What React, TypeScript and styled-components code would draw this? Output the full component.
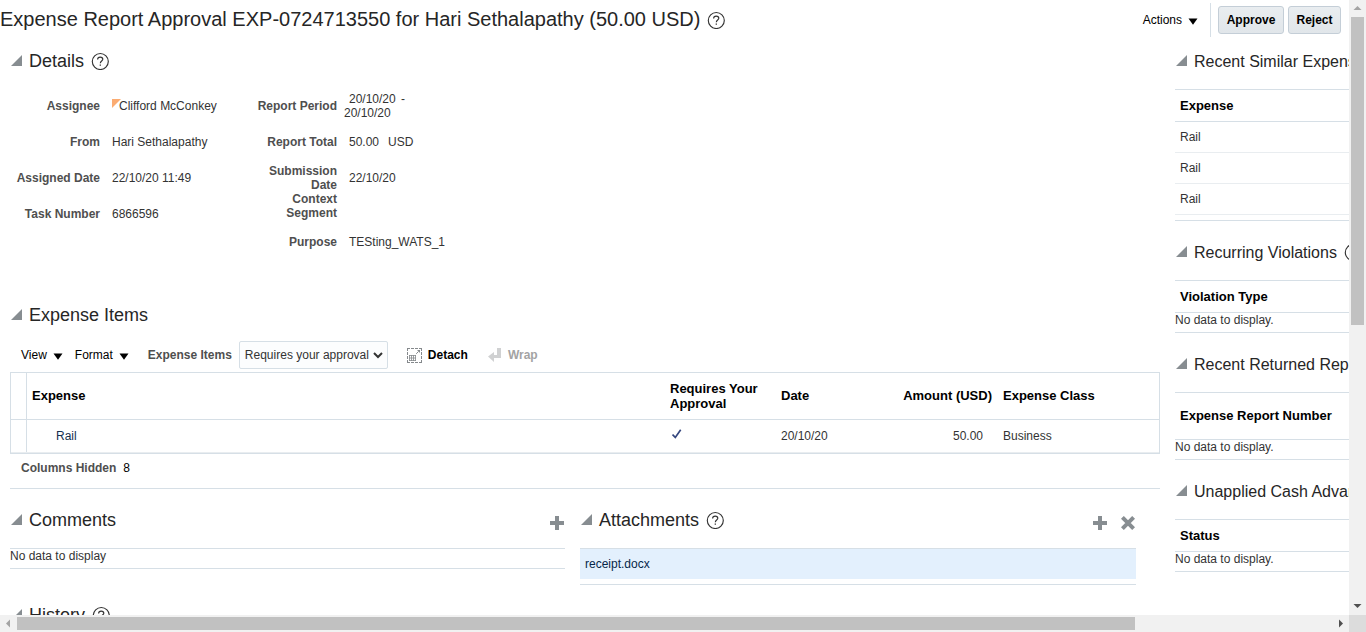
import React from "react";
import styled, { createGlobalStyle } from "styled-components";

const Global = createGlobalStyle`
  * { box-sizing: border-box; }
  body { margin: 0; background: #fff; overflow: hidden; }
`;

const rule = "#d6dfe6";

const Frame = styled.div`
  display: grid;
  grid-template: 615px 17px / 1349px 17px;
  width: 1366px;
  height: 632px;
  overflow: hidden;
  font: 12px/14px "Liberation Sans", Arial, sans-serif;
  color: #333;
  white-space: nowrap;
`;
const Page = styled.div`
  overflow: hidden;
  display: flex;
  flex-direction: column;
`;
const Header = styled.header`
  height: 40px;
  flex: none;
  display: flex;
  justify-content: space-between;
  padding-right: 8px;
`;
const Title = styled.h1`
  margin: 0;
  display: flex;
  align-items: center;
  gap: 7px;
  font-size: 20px;
  line-height: 22px;
  font-weight: 400;
  color: #262626;
  height: 38px;
  & > svg { margin-top: 2px; }
`;
const Commands = styled.div`
  display: flex;
  align-items: center;
  height: 40px;
`;
const MenuButton = styled.span<{ $gap?: number }>`
  display: inline-flex;
  align-items: center;
  gap: 6px;
  color: #000;
  margin-right: ${(p) => p.$gap ?? 0}px;
  & > svg { margin-top: 2px; }
`;
const CommandRule = styled.span`
  width: 1px;
  height: 34px;
  background: ${rule};
  margin-right: 7px;
`;
const Button = styled.button<{ $width: number }>`
  width: ${(p) => p.$width}px;
  height: 28px;
  padding: 0;
  margin-left: 0;
  border: 1px solid #c4ced7;
  border-radius: 3px;
  background: linear-gradient(#e9edf0, #e1e6ea);
  font: bold 12px/14px "Liberation Sans", Arial, sans-serif;
  color: #000;
  & + & { margin-left: 4px; }
`;
const Body = styled.div`
  display: flex;
  flex: none;
  padding-top: 6px;
`;
const Main = styled.main`
  width: 1175px;
  flex: none;
  padding: 0 15px 0 10px;
`;
const Side = styled.aside`
  width: 174px;
  flex: none;
  overflow: hidden;
`;
const Heading = styled.div<{ $size?: number }>`
  display: flex;
  align-items: center;
  height: 30px;
  padding-left: 1px;
  font-size: ${(p) => p.$size ?? 18}px;
  line-height: 20px;
  color: #262626;
  & > svg { flex: none; }
  & > svg:first-child { margin-bottom: 1px; }
  & > h2 { padding-top: ${(p) => (p.$size ? 2 : 0)}px; }
`;
const HeadingText = styled.h2`
  margin: 0 7px;
  font: inherit;
`;
const HeadingTools = styled.span`
  margin: 6px 1px 0 auto;
  display: flex;
  gap: 14px;
`;

const Form = styled.div`
  display: flex;
  height: 224px;
  padding-top: 12px;
`;
const FormColumn = styled.div<{ $width: number }>`
  width: ${(p) => p.$width}px;
`;
const Field = styled.div<{ $height?: number; $top?: number }>`
  display: flex;
  align-items: center;
  height: ${(p) => p.$height ?? 36}px;
  margin-top: ${(p) => p.$top ?? 0}px;
`;
const Label = styled.span<{ $width: number }>`
  flex: none;
  width: ${(p) => p.$width}px;
  margin-right: 12px;
  text-align: right;
  font-weight: bold;
  color: #4f4f4f;
`;
const Value = styled.span<{ $gap?: number }>`
  display: inline-flex;
  gap: ${(p) => p.$gap ?? 9}px;
`;
const Period = styled.span`
  margin-left: -5px;
`;
const PeriodStart = styled.span`
  display: block;
  padding-left: 5px;
  word-spacing: 2px;
`;
const Flag = styled.svg`
  flex: none;
  margin-right: -2px;
`;

const Toolbar = styled.div`
  display: flex;
  align-items: center;
  height: 42px;
  padding-left: 11px;
  padding-top: 8px;
`;
const ToolLabel = styled.span`
  font-weight: bold;
  color: #4f4f4f;
  margin: 0 7px 0 8px;
`;
const Choice = styled.span`
  display: flex;
  align-items: center;
  justify-content: space-between;
  width: 149px;
  height: 28px;
  padding: 0 4px 0 5px;
  border: 1px solid ${rule};
  border-radius: 2px;
  background: #fcfdfe;
  color: #333;
  margin-right: 19px;
`;
const Tool = styled.span<{ $off?: boolean }>`
  display: flex;
  align-items: center;
  gap: ${(p) => (p.$off ? 7 : 6)}px;
  font-weight: bold;
  color: ${(p) => (p.$off ? "#a3a3a3" : "#000")};
  margin-right: 20px;
`;

const Grid = styled.div`
  border: 1px solid ${rule};
  height: 82px;
`;
const GridRow = styled.div<{ $head?: boolean }>`
  display: grid;
  grid-template-columns: 16px 638px 111px 111px 111px 1fr;
  height: ${(p) => (p.$head ? 47 : 33)}px;
  border-bottom: 1px solid ${(p) => (p.$head ? rule : "#e9edf0")};
  align-items: center;
  font-size: ${(p) => (p.$head ? 13 : 12)}px;
  line-height: ${(p) => (p.$head ? 15 : 14)}px;
  font-weight: ${(p) => (p.$head ? "bold" : "normal")};
  color: ${(p) => (p.$head ? "#000" : "#333")};
`;
const RowHandle = styled.span`
  height: 100%;
  border-right: 1px solid ${rule};
`;
const Cell = styled.span<{ $left?: number; $right?: number; $bottom?: number; $num?: boolean; $link?: boolean }>`
  padding-left: ${(p) => p.$left ?? 5}px;
  padding-right: ${(p) => p.$right ?? 0}px;
  padding-bottom: ${(p) => p.$bottom ?? 0}px;
  text-align: ${(p) => (p.$num ? "right" : "left")};
  color: ${(p) => (p.$link ? "#14314f" : "inherit")};
`;
const HiddenColumns = styled.div`
  height: 35px;
  padding: 7px 0 0 11px;
  border-bottom: 1px solid ${rule};
  color: #000;
  b { color: #4f4f4f; margin-right: 7px; }
`;

const Panels = styled.div`
  display: grid;
  grid-template-columns: 555px 556px;
  column-gap: 15px;
  height: 111px;
  padding-top: 16px;
`;
const PanelBody = styled.div<{ $height: number }>`
  margin-top: 13px;
  height: ${(p) => p.$height}px;
  border: solid ${rule};
  border-width: 1px 0;
`;
const FileRow = styled.div`
  height: 30px;
  padding: 8px 5px;
  background: #e3f0fd;
  color: #06274a;
`;

const SideSection = styled.section<{ $height: number }>`
  height: ${(p) => p.$height}px;
`;
const SideTable = styled.div<{ $bottom?: number }>`
  margin-top: 13px;
  padding-bottom: ${(p) => p.$bottom ?? 0}px;
  border: solid ${rule};
  border-width: 1px 0;
`;
const SideHead = styled.div<{ $height?: number }>`
  display: flex;
  align-items: center;
  height: ${(p) => p.$height ?? 32}px;
  padding-left: 5px;
  border-bottom: 1px solid ${rule};
  font-size: 13px;
  font-weight: bold;
  color: #000;
`;
const SideRow = styled.div`
  height: 31px;
  padding: 8px 5px;
  border-bottom: 1px solid #e9edf0;
`;
const SideEmpty = styled.div`
  height: 19px;
`;

const Track = styled.div<{ $vertical?: boolean }>`
  display: flex;
  flex-direction: ${(p) => (p.$vertical ? "column" : "row")};
  justify-content: space-between;
  background: #f1f1f1;
`;
const Thumb = styled.div<{ $vertical?: boolean }>`
  background: #c1c1c1;
  width: ${(p) => (p.$vertical ? "13px" : "1118px")};
  height: ${(p) => (p.$vertical ? "308px" : "13px")};
  margin: ${(p) => (p.$vertical ? "0 2px auto" : "2px auto 2px 0")};
`;
const Corner = styled.div`
  background: #dcdcdc;
`;

const Disclosure = () => (
  <svg width="11" height="11" viewBox="0 0 11 11">
    <path d="M11 0V11H0Z" fill="#878d91" />
  </svg>
);
const Help = () => (
  <svg width="18" height="18" viewBox="0 0 18 18" fill="none" stroke="#333" strokeWidth="1.15">
    <circle cx="9.3" cy="9.5" r="8" />
    <path d="M6.6 7.5C6.6 6 7.6 5.1 9.2 5.1S11.8 5.9 11.8 7.2C11.8 9 9.3 9 9.3 11.2" />
    <path d="M9.3 12.4V13.7" strokeWidth="1.3" />
  </svg>
);
const Down = () => (
  <svg width="10" height="7" viewBox="0 0 10 7">
    <path d="M.5 .5H9.5L5 6.8Z" fill="#000" />
  </svg>
);
const Plus = () => (
  <svg width="14" height="14" viewBox="0 0 14 14">
    <path d="M5 0H9V5H14V9H9V14H5V9H0V5H5Z" fill="#878d91" />
  </svg>
);
const Cross = () => (
  <svg width="14" height="14" viewBox="0 0 14 14">
    <path d="M1.4 1.4L12.6 12.6M12.6 1.4L1.4 12.6" stroke="#878d91" strokeWidth="4" />
  </svg>
);
const DetachIcon = () => (
  <svg width="15" height="15" viewBox="0 0 15 15" fill="none" stroke="#85898c">
    <path d="M0 .5H15M0 14.5H15M.5 0V15M14.5 0V15" strokeDasharray="3 1" />
    <path d="M2 7.5H9M2.5 7V13M4.5 7V13M6.5 7V13M8.5 7V13M2 10H9M2 12.5H9" strokeWidth=".8" />
    <path d="M9.2 5.8L11.5 3.5" />
    <path d="M10 2H13V5Z" fill="#85898c" stroke="none" />
  </svg>
);
const WrapIcon = () => (
  <svg width="13" height="14" viewBox="0 0 13 14">
    <path d="M9 0H13V10H6V14L0 8.5L6 4V7H9Z" fill="#d0d1d2" />
  </svg>
);
const Check = () => (
  <svg width="10" height="10" viewBox="0 0 10 10" fill="none" stroke="#35477f" strokeWidth="1.7">
    <path d="M.5 5.6L3.3 8.4L8.7 .8" />
  </svg>
);
const arrows = {
  up: "M4.5 10H12.5L8.5 6Z",
  down: "M4.5 6H12.5L8.5 10Z",
  left: "M10 4.5V12.5L6 8.5Z",
  right: "M7 4.5V12.5L11 8.5Z",
};
const ScrollArrow = ({ dir, fill }: { dir: keyof typeof arrows; fill: string }) => (
  <svg width="17" height="17" viewBox="0 0 17 17">
    <path d={arrows[dir]} fill={fill} />
  </svg>
);

type SectionHeadingProps = { text: string; size?: number; help?: boolean; children?: React.ReactNode };
const SectionHeading = ({ text, size, help, children }: SectionHeadingProps) => (
  <Heading $size={size}>
    <Disclosure />
    <HeadingText>{text}</HeadingText>
    {help && <Help />}
    {children}
  </Heading>
);

const emptySections = [
  { title: "Recurring Violations", column: "Violation Type", height: 112, head: 32, help: true },
  { title: "Recent Returned Reports", column: "Expense Report Number", height: 127, head: 47 },
  { title: "Unapplied Cash Advances", column: "Status", height: 112, head: 32 },
];

export default function App() {
  return (
    <Frame>
      <Global />
      <Page>
        <Header>
          <Title>
            Expense Report Approval EXP-0724713550 for Hari Sethalapathy (50.00 USD)
            <Help />
          </Title>
          <Commands>
            <MenuButton $gap={12}>Actions <Down /></MenuButton>
            <CommandRule />
            <Button $width={66}>Approve</Button>
            <Button $width={53}>Reject</Button>
          </Commands>
        </Header>
        <Body>
          <Main>
            <SectionHeading text="Details" help />
            <Form>
              <FormColumn $width={207}>
                <Field>
                  <Label $width={90}>Assignee</Label>
                  <Value $gap={0}>
                    <Flag width="9" height="9" viewBox="0 0 9 9"><path d="M0 0H9L0 9Z" fill="#fbac72" /></Flag>
                    <span>Clifford McConkey</span>
                  </Value>
                </Field>
                <Field><Label $width={90}>From</Label><Value>Hari Sethalapathy</Value></Field>
                <Field><Label $width={90}>Assigned Date</Label><Value>22/10/20 11:49</Value></Field>
                <Field><Label $width={90}>Task Number</Label><Value>6866596</Value></Field>
              </FormColumn>
              <FormColumn $width={260}>
                <Field>
                  <Label $width={120}>Report Period</Label>
                  <Period><PeriodStart>20/10/20 -</PeriodStart>20/10/20</Period>
                </Field>
                <Field><Label $width={120}>Report Total</Label><Value><span>50.00</span><span>USD</span></Value></Field>
                <Field $height={28} $top={4}><Label $width={120}>Submission<br />Date</Label><Value>22/10/20</Value></Field>
                <Field $height={28}><Label $width={120}>Context<br />Segment</Label></Field>
                <Field $top={4}><Label $width={120}>Purpose</Label><Value>TESting_WATS_1</Value></Field>
              </FormColumn>
            </Form>

            <SectionHeading text="Expense Items" />
            <Toolbar>
              <MenuButton $gap={12}>View <Down /></MenuButton>
              <MenuButton $gap={11}>Format <Down /></MenuButton>
              <ToolLabel>Expense Items</ToolLabel>
              <Choice>
                Requires your approval
                <svg width="10" height="7" viewBox="0 0 10 7" fill="none" stroke="#333" strokeWidth="2">
                  <path d="M1 1L5 5L9 1" />
                </svg>
              </Choice>
              <Tool><DetachIcon />Detach</Tool>
              <Tool $off><WrapIcon />Wrap</Tool>
            </Toolbar>
            <Grid>
              <GridRow $head>
                <RowHandle />
                <Cell $bottom={2}>Expense</Cell>
                <Cell>Requires Your<br />Approval</Cell>
                <Cell $bottom={2}>Date</Cell>
                <Cell $bottom={2} $left={0} $right={6} $num>Amount (USD)</Cell>
                <Cell $bottom={2}>Expense Class</Cell>
              </GridRow>
              <GridRow>
                <RowHandle />
                <Cell $left={29} $link>Rail</Cell>
                <Cell $left={7} $bottom={2}><Check /></Cell>
                <Cell>20/10/20</Cell>
                <Cell $num $right={15}>50.00</Cell>
                <Cell>Business</Cell>
              </GridRow>
            </Grid>
            <HiddenColumns><b>Columns Hidden</b>8</HiddenColumns>

            <Panels>
              <section>
                <SectionHeading text="Comments">
                  <HeadingTools><Plus /></HeadingTools>
                </SectionHeading>
                <PanelBody $height={21}>No data to display</PanelBody>
              </section>
              <section>
                <SectionHeading text="Attachments" help>
                  <HeadingTools><Plus /><Cross /></HeadingTools>
                </SectionHeading>
                <PanelBody $height={37}><FileRow>receipt.docx</FileRow></PanelBody>
              </section>
            </Panels>
            <SectionHeading text="History" help />
          </Main>

          <Side>
            <SideSection $height={191}>
              <SectionHeading text="Recent Similar Expenses" size={16} />
              <SideTable $bottom={5}>
                <SideHead>Expense</SideHead>
                <SideRow>Rail</SideRow>
                <SideRow>Rail</SideRow>
                <SideRow>Rail</SideRow>
              </SideTable>
            </SideSection>
            {emptySections.map((s) => (
              <SideSection key={s.title} $height={s.height}>
                <SectionHeading text={s.title} size={16} help={s.help} />
                <SideTable>
                  <SideHead $height={s.head}>{s.column}</SideHead>
                  <SideEmpty>No data to display.</SideEmpty>
                </SideTable>
              </SideSection>
            ))}
          </Side>
        </Body>
      </Page>
      <Track $vertical>
        <ScrollArrow dir="up" fill="#a3a3a3" />
        <Thumb $vertical />
        <ScrollArrow dir="down" fill="#505050" />
      </Track>
      <Track>
        <ScrollArrow dir="left" fill="#a3a3a3" />
        <Thumb />
        <ScrollArrow dir="right" fill="#505050" />
      </Track>
      <Corner />
    </Frame>
  );
}
